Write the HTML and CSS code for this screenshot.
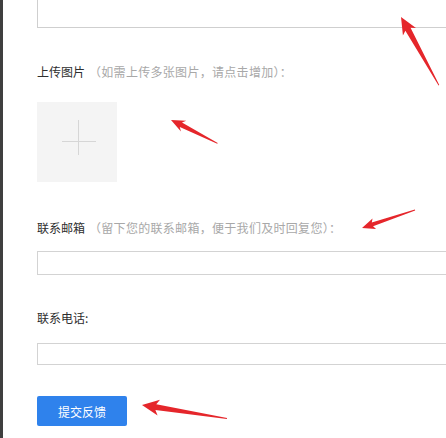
FILE: index.html
```html
<!DOCTYPE html>
<html lang="zh">
<head>
<meta charset="utf-8">
<title>反馈</title>
<link rel="stylesheet" href="styles.css">
</head>
<body>
<div class="page">
  <div class="textarea"></div>

  <div class="label label-upload">上传图片<span class="hint">（如需上传多张图片，请点击增加）：</span></div>
  <div class="upload"><span class="plus-h"></span><span class="plus-v"></span></div>

  <div class="label label-email">联系邮箱<span class="hint">（留下您的联系邮箱，便于我们及时回复您）：</span></div>
  <div class="input input-email"></div>

  <div class="label label-phone">联系电话:</div>
  <div class="input input-phone"></div>

  <button class="submit">提交反馈</button>
</div>

<svg class="marks" width="446" height="438" viewBox="0 0 446 438">
  <g fill="#e5262b">
    <polygon transform="translate(401,17) rotate(60.2)" points="0,0 17,-7.5 14,-3 78,0.6 78,1.4 14,3 17,7.5"/>
    <polygon transform="translate(171,120) rotate(26.1)" points="0,0 14,-6 11,-2.5 52,0 52,1 11,2.5 14,6"/>
    <polygon transform="translate(362,228) rotate(-18.8)" points="0,0 13,-5.5 11,-2 56,-0.5 56,0.5 11,2 13,5.5"/>
    <polygon transform="translate(142,405) rotate(8.7)" points="0,0 17,-8 14,-3 86,0 86,1 14,3 17,8"/>
  </g>
</svg>
</body>
</html>
```

FILE: styles.css
```css
html, body {
  margin: 0;
  padding: 0;
  background: #ffffff;
}
body {
  width: 446px;
  height: 438px;
  overflow: hidden;
  position: relative;
  font-family: "Noto Sans CJK SC", "Microsoft YaHei", sans-serif;
  font-size: 12px;
  color: #2e2e2e;
}
.page {
  width: 446px;
  height: 438px;
  overflow: hidden;
  border-left: 3px solid #3f3f3f;
  padding-left: 34px;
  box-sizing: border-box;
  display: flex;
  flex-direction: column;
  align-items: flex-start;
}
.textarea {
  width: 440px;
  height: 27px;
  border: 1px solid #cfcfcf;
  border-top: none;
  flex-shrink: 0;
}
.label {
  line-height: 20px;
  height: 20px;
  white-space: nowrap;
}
.hint {
  color: #a8a8a8;
  margin-left: 4px;
  letter-spacing: 0.3px;
}
.label-upload { margin-top: 34px; }
.upload {
  margin-top: 20px;
  width: 80px;
  height: 80px;
  background: #f4f4f4;
  position: relative;
  flex-shrink: 0;
}
.plus-h {
  position: absolute;
  left: 25px;
  top: 39px;
  width: 34px;
  height: 1px;
  background: #d6d6d6;
}
.plus-v {
  position: absolute;
  left: 41px;
  top: 18px;
  width: 1px;
  height: 35px;
  background: #d6d6d6;
}
.label-email { margin-top: 36px; }
.input {
  width: 440px;
  border: 1px solid #d3d3d3;
  border-right: none;
  background: #fff;
  box-sizing: border-box;
  flex-shrink: 0;
}
.input-email { margin-top: 13px; height: 24px; }
.label-phone { margin-top: 33px; }
.input-phone { margin-top: 15px; height: 22px; }
.submit {
  margin-top: 31px;
  width: 90px;
  height: 30px;
  border: none;
  border-radius: 2px;
  background: #2f82ec;
  color: #ffffff;
  font-family: "Noto Sans CJK SC", "Microsoft YaHei", sans-serif;
  font-size: 12px;
  padding: 0;
  flex-shrink: 0;
}
.marks {
  position: absolute;
  left: 0;
  top: 0;
  pointer-events: none;
}
```
